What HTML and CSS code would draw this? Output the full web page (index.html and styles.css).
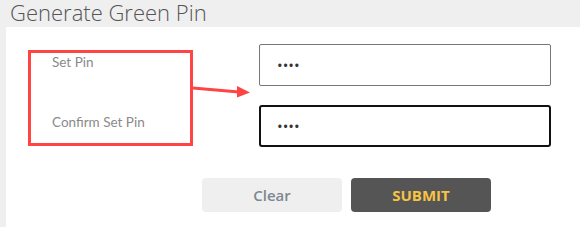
FILE: index.html
```html
<!DOCTYPE html>
<html>
<head>
<meta charset="utf-8">
<link rel="stylesheet" href="styles.css">
</head>
<body>
<div class="screen">
  <div class="title">Generate Green Pin</div>
  <div class="panel">
    <div class="form-area">
      <div class="label-box">
        <div class="label label-first">Set Pin</div>
        <div class="label label-second">Confirm Set Pin</div>
      </div>
      <svg class="arrow" width="66" height="16" viewBox="0 0 66 16">
        <line x1="0" y1="4" x2="46" y2="8" stroke="#ff4444" stroke-width="3"/>
        <polygon points="44,2 57,8.5 44,13.5" fill="#ff4444"/>
      </svg>
      <div class="inputs">
        <input class="pin" type="password" value="1234">
        <input class="pin pin-active" type="password" value="1234">
      </div>
    </div>
    <div class="actions">
      <button class="btn btn-clear">Clear</button>
      <button class="btn btn-submit">SUBMIT</button>
    </div>
  </div>
</div>
</body>
</html>
```
FILE: styles.css
```css
* { box-sizing: border-box; }
body {
  margin: 0;
  background: #ffffff;
  font-family: "Open Sans", "Noto Sans", sans-serif;
}
.screen {
  background: #efefef;
  padding-left: 6px;
  height: 227px;
}
.title {
  height: 27px;
  padding-left: 4px;
  font-size: 22px;
  font-weight: 300;
  line-height: 24px;
  color: #555555;
}
.panel {
  background: #ffffff;
  height: 200px;
}
.form-area {
  display: flex;
  align-items: flex-start;
}
.label-box {
  margin-left: 22px;
  margin-top: 23px;
  width: 165px;
  height: 96px;
  border: 3px solid #ff4444;
  padding-left: 21px;
}
.label {
  font-family: "Lato", "Open Sans", sans-serif;
  font-size: 13.5px;
  color: #8a8a8a;
  line-height: 16px;
}
.label-first { margin-top: 1px; }
.label-second { margin-top: 44px; }
.arrow {
  margin-top: 57px;
  display: block;
}
.inputs {
  margin-top: 17px;
  display: flex;
  flex-direction: column;
  gap: 19px;
}
.pin {
  width: 292px;
  height: 42px;
  border: 1px solid #777777;
  border-radius: 2px;
  padding: 0 0 0 17px;
  font-size: 15px;
  color: #333333;
  letter-spacing: 0;
  outline: none;
  font-family: "Open Sans", sans-serif;
}
.pin-active {
  border: 2px solid #111111;
  border-radius: 3px;
  padding-left: 16px;
}
.actions {
  display: flex;
  gap: 9px;
  margin-top: 31px;
  margin-left: 196px;
}
.btn {
  width: 140px;
  height: 34px;
  border: none;
  border-radius: 4px;
  font-family: "Open Sans", sans-serif;
  font-size: 15px;
  padding: 0;
}
.btn-clear {
  background: #efefef;
  color: #7d8791;
  font-weight: 600;
}
.btn-submit {
  background: #555555;
  color: #f6c344;
  font-weight: 700;
}
```
